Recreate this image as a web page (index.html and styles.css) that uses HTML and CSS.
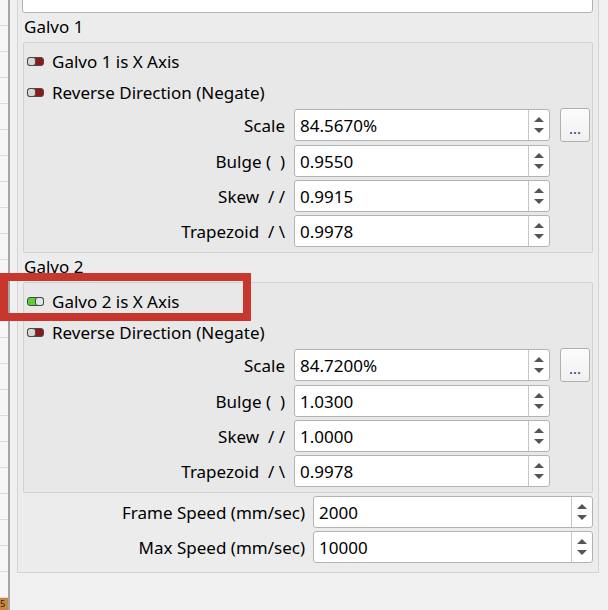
FILE: index.html
```html
<!DOCTYPE html>
<html lang="en">
<head>
    <meta charset="UTF-8">
    <title>Galvo Settings</title>
    <link rel="stylesheet" href="styles.css">
</head>
<body>
    <div class="side">
        <div class="tag">5</div>
    </div>
    <div class="panel">
        <div class="field"></div>

        <div class="title">Galvo 1</div>
        <div class="group">
            <div class="check">
                <svg class="toggle" width="17" height="9" viewBox="0 0 17 9"><rect x="0.5" y="0.5" width="16" height="8" rx="2.5" fill="#8b1b1b" stroke="#484848"/><rect x="0.5" y="0.5" width="8" height="8" rx="2.5" fill="#ddd4d4" stroke="#484848"/></svg>
                <span>Galvo 1 is X Axis</span>
            </div>
            <div class="check">
                <svg class="toggle" width="17" height="9" viewBox="0 0 17 9"><rect x="0.5" y="0.5" width="16" height="8" rx="2.5" fill="#8b1b1b" stroke="#484848"/><rect x="0.5" y="0.5" width="8" height="8" rx="2.5" fill="#ddd4d4" stroke="#484848"/></svg>
                <span>Reverse Direction (Negate)</span>
            </div>
            <div class="form">
                <label>Scale</label>
                <div class="spin"><span class="val">84.5670%</span><span class="arrows"><i class="up"></i><i class="down"></i></span></div>
                <button class="more">...</button>

                <label>Bulge (&nbsp;&nbsp;)</label>
                <div class="spin"><span class="val">0.9550</span><span class="arrows"><i class="up"></i><i class="down"></i></span></div>
                <span></span>

                <label>Skew&nbsp;&nbsp;/ /</label>
                <div class="spin"><span class="val">0.9915</span><span class="arrows"><i class="up"></i><i class="down"></i></span></div>
                <span></span>

                <label>Trapezoid&nbsp;&nbsp;/ \</label>
                <div class="spin"><span class="val">0.9978</span><span class="arrows"><i class="up"></i><i class="down"></i></span></div>
                <span></span>
            </div>
        </div>

        <div class="title">Galvo 2</div>
        <div class="group">
            <div class="check">
                <svg class="toggle" width="17" height="9" viewBox="0 0 17 9"><rect x="0.5" y="0.5" width="16" height="8" rx="2.5" fill="#5ccf38" stroke="#484848"/><rect x="8.5" y="0.5" width="8" height="8" rx="2.5" fill="#e4e4e4" stroke="#484848"/></svg>
                <span>Galvo 2 is X Axis</span>
            </div>
            <div class="check">
                <svg class="toggle" width="17" height="9" viewBox="0 0 17 9"><rect x="0.5" y="0.5" width="16" height="8" rx="2.5" fill="#8b1b1b" stroke="#484848"/><rect x="0.5" y="0.5" width="8" height="8" rx="2.5" fill="#ddd4d4" stroke="#484848"/></svg>
                <span>Reverse Direction (Negate)</span>
            </div>
            <div class="form">
                <label>Scale</label>
                <div class="spin"><span class="val">84.7200%</span><span class="arrows"><i class="up"></i><i class="down"></i></span></div>
                <button class="more">...</button>

                <label>Bulge (&nbsp;&nbsp;)</label>
                <div class="spin"><span class="val">1.0300</span><span class="arrows"><i class="up"></i><i class="down"></i></span></div>
                <span></span>

                <label>Skew&nbsp;&nbsp;/ /</label>
                <div class="spin"><span class="val">1.0000</span><span class="arrows"><i class="up"></i><i class="down"></i></span></div>
                <span></span>

                <label>Trapezoid&nbsp;&nbsp;/ \</label>
                <div class="spin"><span class="val">0.9978</span><span class="arrows"><i class="up"></i><i class="down"></i></span></div>
                <span></span>
            </div>
        </div>

        <div class="speeds">
            <label>Frame Speed (mm/sec)</label>
            <div class="spin"><span class="val">2000</span><span class="arrows"><i class="up"></i><i class="down"></i></span></div>

            <label>Max Speed (mm/sec)</label>
            <div class="spin"><span class="val">10000</span><span class="arrows"><i class="up"></i><i class="down"></i></span></div>
        </div>
    </div>

    <div class="highlight"></div>
</body>
</html>
```

FILE: styles.css
```css
body {
    margin: 0;
    height: 610px;
    overflow: hidden;
    position: relative;
    display: flex;
    align-items: flex-start;
    background-color: #f0f0f0;
    font-family: "Noto Sans", "DejaVu Sans", sans-serif;
    font-size: 17px;
    color: #000;
}
.side {
    width: 8px;
    height: 610px;
    border-right: 2px solid #a4a4a4;
    background: #f6f6f6 repeating-linear-gradient(to bottom, transparent 0, transparent 25px, #dcdcdc 25px, #dcdcdc 26px);
    display: flex;
    flex-direction: column;
}
.tag {
    margin-top: auto;
    height: 12px;
    background-color: #c9863c;
    font-size: 9px;
    line-height: 12px;
    color: #222;
}
.panel {
    box-sizing: border-box;
    width: 582px;
    height: 603px;
    margin: -30px 0 0 7px;
    padding: 10px 5px 0 4px;
    border: 1px solid #d3d3d3;
    background-color: #ececec;
}
.field {
    box-sizing: border-box;
    height: 32px;
    background-color: #fff;
    border: 1px solid #b3b3b3;
    border-radius: 3px;
}
.title {
    height: 29px;
    padding: 0 0 2px 2px;
    box-sizing: border-box;
    display: flex;
    align-items: center;
}
.group {
    box-sizing: border-box;
    height: 211px;
    margin-left: 1px;
    padding: 3px 3px 0 3px;
    border: 1px solid #d2d2d2;
    border-radius: 2px;
    background-color: #e8e8e8;
}
.check {
    height: 31px;
    display: flex;
    align-items: center;
    gap: 8px;
}
.toggle {
    display: block;
}
.form {
    display: grid;
    grid-template-columns: 1fr 256px 30px;
    column-gap: 9px;
    row-gap: 3px;
    align-items: center;
}
.form label, .speeds label {
    text-align: right;
    white-space: nowrap;
}
.spin {
    box-sizing: border-box;
    height: 32px;
    display: flex;
    background-color: #fff;
    border: 1px solid #b3b3b3;
    border-radius: 3px;
}
.val {
    flex: 1;
    padding-left: 5px;
    display: flex;
    align-items: center;
}
.arrows {
    width: 20px;
    border-left: 1px solid #c6c6c6;
    display: flex;
    flex-direction: column;
    align-items: center;
    justify-content: center;
    gap: 6px;
}
.up, .down {
    width: 0;
    height: 0;
    border-left: 5px solid transparent;
    border-right: 5px solid transparent;
}
.up {
    border-bottom: 5px solid #555;
}
.down {
    border-top: 5px solid #555;
}
.more {
    box-sizing: border-box;
    width: 30px;
    height: 34px;
    margin-left: 1px;
    padding: 6px 0 0;
    border: 1px solid #b0b0b0;
    border-radius: 3px;
    background: linear-gradient(#fcfcfc, #f0f0f0);
    color: #2c3a8c;
    font-family: inherit;
    font-size: 15px;
}
.speeds {
    margin: 3px 0 0 1px;
    display: grid;
    grid-template-columns: 1fr 280px;
    column-gap: 8px;
    row-gap: 3px;
    align-items: center;
}
.highlight {
    position: absolute;
    left: 0;
    top: 273px;
    width: 251px;
    height: 48px;
    box-sizing: border-box;
    border: 8px solid #c8372d;
}
```
